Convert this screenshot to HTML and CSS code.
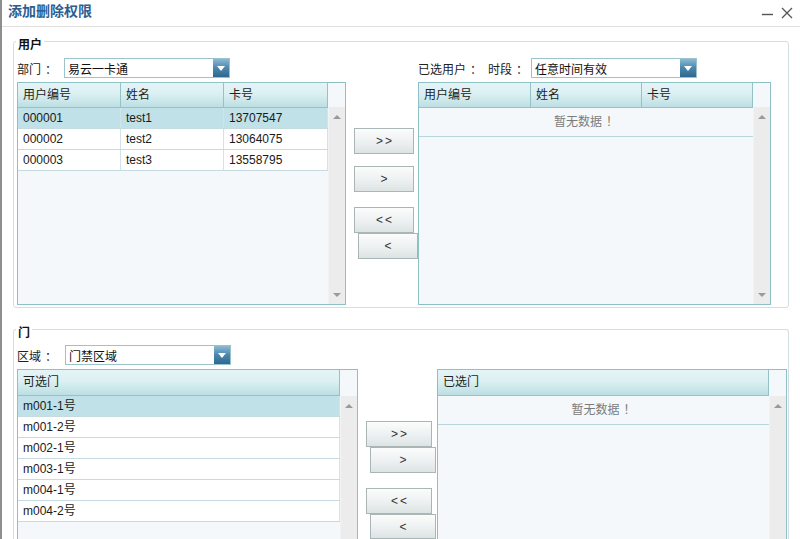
FILE: index.html
```html
<!DOCTYPE html>
<html lang="zh-CN">
<head>
<meta charset="utf-8">
<title>添加删除权限</title>
<link rel="stylesheet" href="styles.css">
</head>
<body>
<div class="window">
  <div class="titlebar">
    <span class="title">添加删除权限</span>
    <svg class="tools" width="32" height="16" viewBox="0 0 32 16">
      <line x1="1" y1="10.5" x2="12" y2="10.5" stroke="#555" stroke-width="1.4"/>
      <path d="M21 4 L31 14 M31 4 L21 14" stroke="#555" stroke-width="1.3" fill="none"/>
    </svg>
  </div>

  <div class="group g-user">
    <div class="legend">用户</div>
    <div class="ugrid">
      <div class="bar">
        <span class="lbl w47">部门<span class="punct">：</span></span>
        <div class="select"><span>易云一卡通</span><span class="dd"><svg width="8" height="5" viewBox="0 0 8 5"><path d="M0 0 H8 L4 5 Z" fill="#fff"/></svg></span></div>
      </div>
      <div></div>
      <div class="bar">
        <span class="lbl w70">已选用户<span class="punct">：</span></span>
        <span class="lbl w43">时段<span class="punct">：</span></span>
        <div class="select"><span>任意时间有效</span><span class="dd"><svg width="8" height="5" viewBox="0 0 8 5"><path d="M0 0 H8 L4 5 Z" fill="#fff"/></svg></span></div>
      </div>

      <div class="tbl utbl">
        <div class="tmain">
          <div class="thead ucolsL"><div>用户编号</div><div>姓名</div><div>卡号</div></div>
          <div class="trow sel ucolsL"><div>000001</div><div>test1</div><div>13707547</div></div>
          <div class="trow ucolsL"><div>000002</div><div>test2</div><div>13064075</div></div>
          <div class="trow ucolsL"><div>000003</div><div>test3</div><div>13558795</div></div>
        </div>
        <div class="vscroll">
          <div class="vs-head"></div>
          <div class="vs-track"><i class="arr up"></i><i class="arr down"></i></div>
        </div>
      </div>

      <div class="btns ubtns">
        <div class="btn b1">&gt;&gt;</div>
        <div class="btn b2">&gt;</div>
        <div class="btn b3">&lt;&lt;</div>
        <div class="btn b4">&lt;</div>
      </div>

      <div class="tbl utbl">
        <div class="tmain">
          <div class="thead ucolsR"><div>用户编号</div><div>姓名</div><div>卡号</div></div>
          <div class="empty">暂无数据<span class="punct">！</span></div>
        </div>
        <div class="vscroll">
          <div class="vs-head"></div>
          <div class="vs-track"><i class="arr up"></i><i class="arr down"></i></div>
        </div>
      </div>
    </div>
  </div>

  <div class="group g-door">
    <div class="legend">门</div>
    <div class="dgrid">
      <div class="bar">
        <span class="lbl w48">区域<span class="punct">：</span></span>
        <div class="select"><span>门禁区域</span><span class="dd"><svg width="8" height="5" viewBox="0 0 8 5"><path d="M0 0 H8 L4 5 Z" fill="#fff"/></svg></span></div>
      </div>
      <div></div>
      <div></div>

      <div class="tbl dtbl">
        <div class="tmain">
          <div class="thead dhead"><div>可选门</div></div>
          <div class="trow sel"><div>m001-1号</div></div>
          <div class="trow"><div>m001-2号</div></div>
          <div class="trow"><div>m002-1号</div></div>
          <div class="trow"><div>m003-1号</div></div>
          <div class="trow"><div>m004-1号</div></div>
          <div class="trow"><div>m004-2号</div></div>
        </div>
        <div class="vscroll">
          <div class="vs-head dvs"></div>
          <div class="vs-track"><i class="arr up"></i></div>
        </div>
      </div>

      <div class="btns dbtns">
        <div class="btn b1">&gt;&gt;</div>
        <div class="btn b2">&gt;</div>
        <div class="btn b3">&lt;&lt;</div>
        <div class="btn b4">&lt;</div>
      </div>

      <div class="tbl dtbl">
        <div class="tmain">
          <div class="thead dhead"><div>已选门</div></div>
          <div class="empty">暂无数据<span class="punct">！</span></div>
        </div>
        <div class="vscroll">
          <div class="vs-head dvs"></div>
          <div class="vs-track"><i class="arr up"></i></div>
        </div>
      </div>
    </div>
  </div>
</div>
</body>
</html>
```

FILE: styles.css
```css
* { box-sizing: border-box; }
html, body { margin: 0; padding: 0; background: #fff; }
body {
  width: 800px;
  height: 539px;
  overflow: hidden;
  font-family: "Liberation Sans", "Noto Sans CJK SC", sans-serif;
  font-size: 12px;
  color: #222;
}
.window {
  height: 539px;
  border-left: 2px solid #8e8e8e;
  overflow: hidden;
}
.titlebar {
  height: 27px;
  border-bottom: 1px solid #e0e0e0;
  display: flex;
  justify-content: space-between;
  align-items: flex-start;
  padding: 0 7px 0 6px;
}
.title {
  font-size: 14px;
  font-weight: bold;
  color: #2c5e91;
  line-height: 23px;
}
.tools { margin-top: 4px; }

.punct { margin-left: 4px; }

.group {
  width: 776px;
  margin-left: 11px;
  border: 1px solid #d3dee4;
  border-radius: 3px;
  padding: 0 0 2px 3px;
}
.g-user { margin-top: 14px; }
.g-door { margin-top: 21px; height: 210px; border-bottom: none; padding-bottom: 0; border-radius: 3px 3px 0 0; }
.legend {
  width: max-content;
  margin: -4px 0 0 -1px;
  padding: 0 2px;
  background: #fff;
  font-weight: bold;
  line-height: 14px;
  color: #111;
}

.ugrid {
  display: grid;
  grid-template-columns: 329px 72px 353px;
  grid-template-rows: 20px 223px;
  row-gap: 4px;
  margin-top: 6px;
}
.dgrid {
  display: grid;
  grid-template-columns: 341px 79px 350px;
  grid-template-rows: 20px 170px;
  row-gap: 4px;
  margin-top: 5px;
}

.bar { display: flex; align-items: center; height: 20px; }
.lbl { flex: none; color: #222; }
.w47 { width: 47px; }
.w48 { width: 48px; }
.w70 { width: 70px; }
.w43 { width: 43px; }

.select {
  width: 166px;
  height: 20px;
  border: 1px solid #9cc3ca;
  background: #fff;
  display: flex;
  align-items: center;
  justify-content: space-between;
  padding-left: 3px;
  color: #111;
}
.dd {
  width: 16px;
  height: 18px;
  background: linear-gradient(#8bbad5, #4c86ad 50%, #2d6890);
  display: flex;
  align-items: center;
  justify-content: center;
}

.tbl {
  display: flex;
  border: 1px solid #8fc0c5;
  background: #f4f8fb;
}
.utbl { height: 223px; }
.dtbl { height: 170px; border-bottom: none; }
.tmain { flex: 1; min-width: 0; }
.vscroll { width: 17px; flex: none; display: flex; flex-direction: column; }
.vs-head { height: 24px; }
.dvs { height: 26px; }
.vs-track {
  flex: 1;
  background: #ececec;
  border-left: 1px solid #f3f3f3;
  display: flex;
  flex-direction: column;
  justify-content: space-between;
  align-items: center;
  padding: 8px 0 7px;
}
.arr { display: block; width: 0; height: 0; border-left: 4px solid transparent; border-right: 4px solid transparent; }
.up { border-bottom: 4px solid #9a9a9a; }
.down { border-top: 4px solid #9a9a9a; }

.thead {
  height: 25px;
  display: grid;
  background: linear-gradient(#e5f4f6, #dbf0f2 45%, #bcdfe3);
  border-bottom: 1px solid #93c2c7;
  line-height: 24px;
  color: #222;
}
.thead > div { border-right: 1px solid #93c2c7; padding-left: 5px; }
.dhead { height: 26px; line-height: 25px; grid-template-columns: 1fr; }
.ucolsL { grid-template-columns: 103px 103px 1fr; }
.ucolsR { grid-template-columns: 112px 111px 1fr; }

.trow {
  height: 21px;
  display: grid;
  background: #fff;
  border-bottom: 1px solid #c5dbe0;
  line-height: 20px;
  color: #1a1a1a;
}
.trow > div { border-right: 1px solid #d3e4e8; padding-left: 5px; }
.trow.sel { background: #c0e1e7; }
.empty {
  height: 29px;
  line-height: 28px;
  text-align: center;
  color: #7c7c7c;
  border-bottom: 1px solid #b7d7dc;
}

.btns { display: flex; flex-direction: column; align-items: flex-start; padding-left: 8px; }
.btn {
  height: 26px;
  flex: none;
  border: 1px solid #aab5b5;
  background: linear-gradient(#fbfcfc, #f0f3f3 45%, #dde3e3);
  display: flex;
  align-items: center;
  justify-content: center;
  color: #333;
  letter-spacing: 2px;
  padding-left: 2px;
}
.ubtns .btn { width: 60px; }
.ubtns .b1 { margin-top: 46px; }
.ubtns .b2 { margin-top: 12px; }
.ubtns .b3 { margin-top: 15px; }
.ubtns .b4 { margin-left: 4px; }
.dbtns .btn { width: 66px; }
.dbtns .b1 { margin-top: 52px; }
.dbtns .b2 { margin-left: 4px; }
.dbtns .b3 { margin-top: 15px; }
.dbtns .b4 { margin-left: 4px; height: 25px; }
```
